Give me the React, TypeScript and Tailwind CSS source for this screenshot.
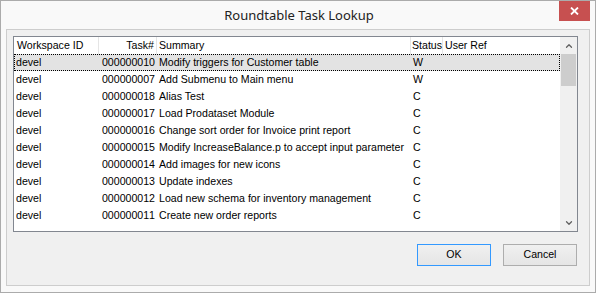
import { ChevronUp, ChevronDown } from "lucide-react";

interface Task {
  workspace: string;
  num: string;
  summary: string;
  status: string;
  userRef: string;
}

const TASKS: Task[] = [
  { workspace: "devel", num: "000000010", summary: "Modify triggers for Customer table", status: "W", userRef: "" },
  { workspace: "devel", num: "000000007", summary: "Add Submenu to Main menu", status: "W", userRef: "" },
  { workspace: "devel", num: "000000018", summary: "Alias Test", status: "C", userRef: "" },
  { workspace: "devel", num: "000000017", summary: "Load Prodataset Module", status: "C", userRef: "" },
  { workspace: "devel", num: "000000016", summary: "Change sort order for Invoice print report", status: "C", userRef: "" },
  { workspace: "devel", num: "000000015", summary: "Modify IncreaseBalance.p to accept input parameter", status: "C", userRef: "" },
  { workspace: "devel", num: "000000014", summary: "Add images for new icons", status: "C", userRef: "" },
  { workspace: "devel", num: "000000013", summary: "Update indexes", status: "C", userRef: "" },
  { workspace: "devel", num: "000000012", summary: "Load new schema for inventory management", status: "C", userRef: "" },
  { workspace: "devel", num: "000000011", summary: "Create new order reports", status: "C", userRef: "" },
];

export default function App() {
  return (
    <div className="w-[596px] h-[293px] border border-[#ababab] bg-[#f9f9f9] flex flex-col text-black">
      {/* Title bar */}
      <div className="relative h-[28px] flex items-center justify-center">
        <span className="text-[13px] text-[#222] font-['Noto_Sans',sans-serif] leading-none pl-[2px]">
          Roundtable Task Lookup
        </span>
        <div className="absolute right-[5px] top-0 w-[31px] h-[20px] bg-[#c75050] flex items-center justify-center">
          <svg width="9" height="8" viewBox="0 0 9 8">
            <path d="M1 0.5 L8 7.5 M8 0.5 L1 7.5" stroke="white" strokeWidth="1.8" />
          </svg>
        </div>
      </div>

      {/* Client */}
      <div className="mx-[5px] mb-[6px] flex-1 border border-[#cdcdcd] bg-[#f0f0f0] pl-[6px] pt-[6px] font-['Liberation_Sans',Arial,sans-serif] text-[10.6px]">
        {/* List view */}
        <div className="w-[565px] h-[196px] border border-[#828790] bg-white flex">
          <div className="flex-1 flex flex-col">
            <div className="h-[17px] flex items-center">
              <div className="w-[85px] h-full pl-[3px] flex items-center border-r border-[#e5e5e5]">Workspace ID</div>
              <div className="w-[58px] h-full pr-[2px] flex items-center justify-end border-r border-[#e5e5e5]">Task#</div>
              <div className="w-[254px] h-full pl-[2px] flex items-center border-r border-[#e5e5e5]">Summary</div>
              <div className="w-[32px] h-full pl-[1px] flex items-center border-r border-[#e5e5e5]">Status</div>
              <div className="flex-1 h-full pl-[2px] flex items-center">User Ref</div>
            </div>
            {TASKS.map((t, i) => (
              <div
                key={t.num}
                className={`h-[17px] flex items-center ${
                  i === 0 ? "bg-[#e3e3e3] outline-1 outline-dotted outline-black -outline-offset-1" : ""
                }`}
              >
                <div className="w-[85px] pl-[2px]">{t.workspace}</div>
                <div className="w-[58px] pr-[2px] text-right tabular-nums [font-kerning:none]">{t.num}</div>
                <div className="w-[254px] pl-[2px] whitespace-nowrap">{t.summary}</div>
                <div className="w-[32px] pl-[2px]">{t.status}</div>
                <div className="flex-1">{t.userRef}</div>
              </div>
            ))}
          </div>
          {/* Scrollbar */}
          <div className="w-[17px] bg-[#f0f0f0] flex flex-col">
            <div className="h-[17px] flex items-center justify-center text-[#606060]">
              <ChevronUp size={10} strokeWidth={3} />
            </div>
            <div className="mx-[1px] h-[32px] bg-[#cdcdcd]" />
            <div className="flex-1" />
            <div className="h-[17px] flex items-center justify-center text-[#606060]">
              <ChevronDown size={10} strokeWidth={3} />
            </div>
          </div>
        </div>

        {/* Buttons */}
        <div className="w-[565px] mt-[12px] flex justify-end gap-[12px] pr-[1px]">
          <button className="w-[74px] h-[22px] border border-[#3399ff] bg-gradient-to-b from-[#f0f0f0] to-[#e5e5e5] flex items-center justify-center">
            OK
          </button>
          <button className="w-[74px] h-[22px] border border-[#adadad] bg-gradient-to-b from-[#f0f0f0] to-[#e5e5e5] flex items-center justify-center">
            Cancel
          </button>
        </div>
      </div>
    </div>
  );
}
